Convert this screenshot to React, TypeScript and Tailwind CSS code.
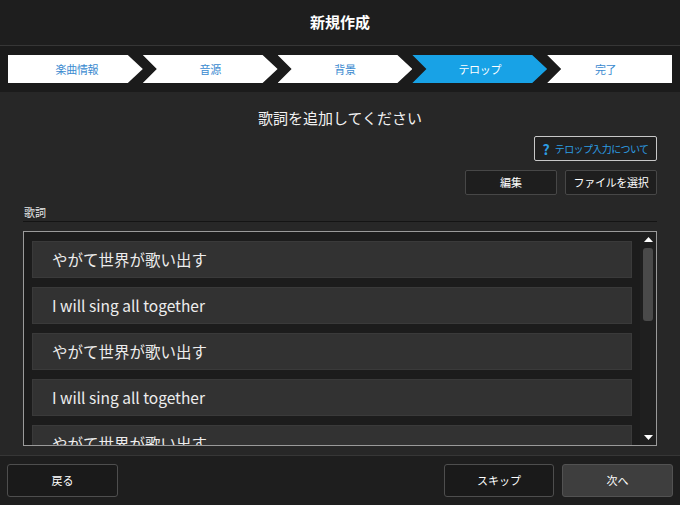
import React from "react";

const JP = { fontFamily: '"Noto Sans CJK JP", "Noto Sans", sans-serif' };

const steps = [
  { label: "楽曲情報", first: true },
  { label: "音源" },
  { label: "背景" },
  { label: "テロップ", active: true },
  { label: "完了", last: true },
];

const lyrics = [
  "やがて世界が歌い出す",
  "I will sing all together",
  "やがて世界が歌い出す",
  "I will sing all together",
  "やがて世界が歌い出す",
];

function Step({ label, first, last, active }: { label: string; first?: boolean; last?: boolean; active?: boolean }) {
  let clip = "";
  if (first) clip = "[clip-path:polygon(0_0,calc(100%-15px)_0,100%_50%,calc(100%-15px)_100%,0_100%)]";
  else if (last) clip = "[clip-path:polygon(0_0,100%_0,100%_100%,0_100%,14px_50%)]";
  else clip = "[clip-path:polygon(0_0,calc(100%-15px)_0,100%_50%,calc(100%-15px)_100%,0_100%,14px_50%)]";
  const w = last ? "w-[125px]" : "w-[135px]";
  const color = active ? "bg-[#18a2e6] text-white" : "bg-white text-[#3a8ad0]";
  return (
    <div className={`${w} h-full ${color} ${clip} flex items-center justify-center text-[11px] tracking-[-0.3px] ${first ? "pl-[3px]" : last ? "pr-[8px]" : ""}`}>
      {label}
    </div>
  );
}

export default function App() {
  return (
    <div className="w-[680px] h-[505px] flex flex-col bg-[#272727] overflow-hidden text-white" style={JP}>
      <div className="h-[46px] shrink-0 bg-[#1e1e1e] border-b border-[#363636] flex items-center justify-center text-[15px] font-bold">
        新規作成
      </div>
      <div className="h-[46px] shrink-0 bg-[#1b1b1b] px-[8px] pt-[9px]">
        <div className="flex h-[28px]">
          {steps.map((s) => (
            <Step key={s.label} {...s} />
          ))}
        </div>
      </div>
      <div className="flex-1 flex flex-col px-[23px]">
        <div className="text-[15px] leading-[20px] text-center mt-[16px] text-[#f2f2f2]">歌詞を追加してください</div>
        <div className="flex justify-end mt-[8px]">
          <button className="w-[123px] h-[25px] border border-[#c8c8c8] rounded-[2px] bg-[#202020] flex items-center justify-center gap-[5px] text-[#2d9de2] text-[10px] whitespace-nowrap">
            <span className="font-bold text-[14px] leading-none">?</span>
            <span className="tracking-[-0.6px]">テロップ入力について</span>
          </button>
        </div>
        <div className="flex justify-end gap-[8px] mt-[9px]">
          <button className="w-[92px] h-[25px] border border-[#474747] rounded-[2px] bg-[#1e1e1e] text-[11px] text-white">編集</button>
          <button className="w-[92px] h-[25px] border border-[#474747] rounded-[2px] bg-[#1e1e1e] text-[11px] tracking-[-0.3px] text-white">ファイルを選択</button>
        </div>
        <div className="mt-[10px] pl-[1px] text-[11px] leading-[15px] pb-[1px] border-b border-[#141414] text-[#e8e8e8]">歌詞</div>
        <div className="mt-[9px] h-[215px] border border-[#9a9a9a] bg-[#1c1c1c] flex overflow-hidden">
          <div className="flex-1 pl-[8px] pr-[8px] pt-[9px] flex flex-col gap-[9px] overflow-hidden">
            {lyrics.map((t, i) => (
              <div
                key={i}
                className="h-[37px] shrink-0 bg-[#323232] border border-[#3a3a3a] flex items-center pl-[19px] text-[15.5px] text-[#ededed]"
              >
                {t}
              </div>
            ))}
          </div>
          <div className="w-[16px] shrink-0 bg-[#1f1f1f] flex flex-col items-center pt-[5px] pb-[5px]">
            <svg width="9" height="5" viewBox="0 0 9 5"><polygon points="4.5,0 9,5 0,5" fill="#ffffff" /></svg>
            <div className="w-[10px] h-[73px] mt-[6px] rounded-[3px] bg-[#4a4a4a]" />
            <div className="flex-1" />
            <svg width="9" height="5" viewBox="0 0 9 5"><polygon points="0,0 9,0 4.5,5" fill="#ffffff" /></svg>
          </div>
        </div>
      </div>
      <div className="h-[50px] shrink-0 bg-[#1e1e1e] border-t border-[#363636] flex items-center px-[7px]">
        <button className="w-[111px] h-[33px] border border-[#4e4e4e] rounded-[3px] bg-[#1a1a1a] text-[11px] text-white">戻る</button>
        <div className="flex-1" />
        <button className="w-[110px] h-[33px] border border-[#4e4e4e] rounded-[3px] bg-[#1a1a1a] text-[11px] text-white mr-[8px]">スキップ</button>
        <button className="w-[111px] h-[33px] border border-[#525252] rounded-[3px] bg-[#3e3e3e] text-[11px] text-white">次へ</button>
      </div>
    </div>
  );
}
